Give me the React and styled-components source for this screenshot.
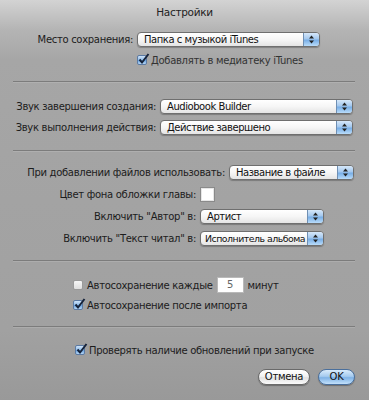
import React from "react";
import styled, { createGlobalStyle } from "styled-components";

const Global = createGlobalStyle`
  html, body { margin: 0; padding: 0; }
  body { font-family: "DejaVu Sans", "Liberation Sans", sans-serif; }
`;

const Window = styled.div`
  width: 369px;
  height: 400px;
  box-sizing: border-box;
  background: linear-gradient(to bottom, #d3d3d3 0px, #b4b4b4 30px, #a6a6a6 60px, #a3a3a3 200px, #a1a1a1 330px, #999 400px);
  color: #1c1c1c;
  font-size: 10px;
  letter-spacing: -0.3px;
  display: flex;
  flex-direction: column;
  overflow: hidden;
`;

const Title = styled.div`
  height: 24px;
  line-height: 24px;
  text-align: center;
  font-size: 10.5px;
  color: #222;
`;

const Section = styled.div`
  display: flex;
  flex-direction: column;
  gap: ${p => p.$gap || 6}px;
  padding-top: ${p => p.$top || 0}px;
`;

const Row = styled.div`
  display: flex;
  align-items: center;
  height: ${p => p.$h || 15}px;
  margin-top: ${p => p.$mt || 0}px;
`;

const Label = styled.div`
  width: ${p => p.$w}px;
  text-align: right;
  padding-right: 4px;
  box-sizing: border-box;
  white-space: nowrap;
`;

const Indent = styled.div`
  width: ${p => p.$w}px;
  flex: none;
`;

const Separator = styled.div`
  height: 1px;
  margin: ${p => p.$mt}px 14px 0 13px;
  background: #7c7c7c;
  box-shadow: 0 1px 0 rgba(255,255,255,0.12);
`;

const Popup = styled.div`
  width: ${p => p.$w}px;
  height: 15px;
  box-sizing: border-box;
  display: flex;
  border: 1px solid #6f6f6f;
  border-radius: 4px;
  background: linear-gradient(to bottom, #ffffff 0%, #f6f6f6 50%, #e4e4e4 100%);
  box-shadow: 0 1px 1px rgba(0,0,0,0.25);
  overflow: hidden;
`;

const PopupText = styled.div`
  flex: 1;
  padding-left: ${p => (p.$tight ? 4 : 6)}px;
  line-height: 13px;
  white-space: nowrap;
  overflow: hidden;
  font-size: ${p => (p.$tight ? 9.4 : 10)}px;
  letter-spacing: ${p => (p.$tight ? -0.5 : -0.45)}px;
  color: #111;
`;

const Stepper = styled.div`
  width: 15px;
  flex: none;
  border-left: 1px solid #6f8fb3;
  background: linear-gradient(to bottom, #d6e8fa 0%, #a4c8ee 45%, #78aee6 55%, #b9dcfa 100%);
  display: flex;
  align-items: center;
  justify-content: center;
`;

const Swatch = styled.div`
  width: 15px;
  height: 15px;
  box-sizing: border-box;
  border: 1px solid #8a8a8a;
  background: #fff;
  box-shadow: inset 0 0 0 1px #e6e6e6;
`;

const CheckBox = styled.div`
  width: 10px;
  height: 10px;
  flex: none;
  position: relative;
  box-sizing: border-box;
  border: 1px solid ${p => (p.$checked ? "#5b7aa3" : "#9a9a9a")};
  border-radius: 2px;
  background: ${p =>
    p.$checked
      ? "linear-gradient(to bottom, #cfe3f8 0%, #8ebbe9 50%, #6aa3df 55%, #b5d6f6 100%)"
      : "linear-gradient(to bottom, #f6f6f6, #dedede)"};
  margin-right: 4px;
`;

const Check = styled.svg`
  position: absolute;
  left: 0px;
  top: -3px;
`;

const CheckLabel = styled.span`
  white-space: nowrap;
  color: ${p => (p.$muted ? "#333" : "#1c1c1c")};
`;

const NumberField = styled.div`
  width: 27px;
  height: 16px;
  box-sizing: border-box;
  margin: 0 4px;
  background: #fff;
  border: 1px solid #b9b9b9;
  text-align: center;
  line-height: 14px;
  color: #666;
`;

const Buttons = styled.div`
  display: flex;
  justify-content: flex-end;
  gap: 8px;
  padding-right: 14px;
  margin-top: 13px;
`;

const Button = styled.div`
  width: ${p => p.$w}px;
  height: 16px;
  box-sizing: border-box;
  border-radius: 8px;
  border: 1px solid ${p => (p.$primary ? "#4a6f9c" : "#6a6a6a")};
  background: ${p =>
    p.$primary
      ? "linear-gradient(to bottom, #d9ebfb 0%, #a6cbef 45%, #7fb2e6 55%, #c2e0fa 100%)"
      : "linear-gradient(to bottom, #ffffff 0%, #f3f3f3 45%, #e2e2e2 55%, #fafafa 100%)"};
  box-shadow: 0 1px 1px rgba(0,0,0,0.3);
  text-align: center;
  line-height: 14px;
  color: #111;
`;

const Arrows = () => (
  <svg width="7" height="11" viewBox="0 0 7 11">
    <path d="M3.5 1.5 L6 4.5 L1 4.5 Z" fill="#222" />
    <path d="M3.5 9.5 L6 6.5 L1 6.5 Z" fill="#222" />
  </svg>
);

const Select = ({ width, value, tight }) => (
  <Popup $w={width}>
    <PopupText $tight={tight}>{value}</PopupText>
    <Stepper>
      <Arrows />
    </Stepper>
  </Popup>
);

const Checkbox = ({ checked, children }) => (
  <>
    <CheckBox $checked={checked}>
      {checked && (
        <Check width="12" height="12" viewBox="0 0 12 12">
          <path d="M1.5 6.5 L4 9.5 L10.5 1" stroke="#16233a" strokeWidth="2" fill="none" />
        </Check>
      )}
    </CheckBox>
    {children}
  </>
);

export default function App() {
  return (
    <Window>
      <Global />
      <Title>Настройки</Title>

      <Row $mt={8}>
        <Label $w={137}>Место сохранения:</Label>
        <Select width={183} value="Папка с музыкой iTunes" />
      </Row>
      <Row $mt={7} $h={12}>
        <Indent $w={137} />
        <Checkbox checked>
          <CheckLabel $muted>Добавлять в медиатеку iTunes</CheckLabel>
        </Checkbox>
      </Row>

      <Separator $mt={15} />

      <Section $top={17} $gap={6}>
        <Row>
          <Label $w={160}>Звук завершения создания:</Label>
          <Select width={193} value="Audiobook Builder" />
        </Row>
        <Row>
          <Label $w={160}>Звук выполнения действия:</Label>
          <Select width={193} value="Действие завершено" />
        </Row>
      </Section>

      <Separator $mt={15} />

      <Section $top={14} $gap={7}>
        <Row>
          <Label $w={229}>При добавлении файлов использовать:</Label>
          <Select width={125} value="Название в файле" />
        </Row>
        <Row>
          <Label $w={200}>Цвет фона обложки главы:</Label>
          <Swatch />
        </Row>
        <Row>
          <Label $w={200}>Включить "Автор" в:</Label>
          <Select width={124} value="Артист" />
        </Row>
        <Row>
          <Label $w={200}>Включить "Текст читал" в:</Label>
          <Select width={124} value="Исполнитель альбома" tight />
        </Row>
      </Section>

      <Separator $mt={14} />

      <Row $mt={16} $h={16}>
        <Indent $w={73} />
        <Checkbox>
          <CheckLabel>Автосохранение каждые</CheckLabel>
        </Checkbox>
        <NumberField>5</NumberField>
        <CheckLabel>минут</CheckLabel>
      </Row>
      <Row $mt={6} $h={12}>
        <Indent $w={73} />
        <Checkbox checked>
          <CheckLabel>Автосохранение после импорта</CheckLabel>
        </Checkbox>
      </Row>

      <Separator $mt={15} />

      <Row $mt={17} $h={12}>
        <Indent $w={75} />
        <Checkbox checked>
          <CheckLabel>Проверять наличие обновлений при запуске</CheckLabel>
        </Checkbox>
      </Row>

      <Buttons>
        <Button $w={52}>Отмена</Button>
        <Button $w={37} $primary>OK</Button>
      </Buttons>
    </Window>
  );
}
